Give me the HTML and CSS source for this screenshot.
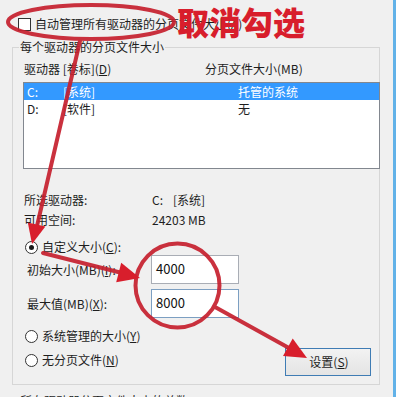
FILE: index.html
```html
<!DOCTYPE html>
<html lang="zh-CN">
<head>
<meta charset="utf-8">
<title>虚拟内存</title>
<link rel="stylesheet" href="styles.css">
</head>
<body>
<div class="page">
  <div class="auto-row">
    <span class="checkbox"></span>
    <span class="auto-text">自动管理所有驱动器的分页文件大小(A)</span>
  </div>
  <fieldset class="group">
    <legend>每个驱动器的分页文件大小</legend>
    <div class="list-head"><span class="head-drive">驱动器 [卷标](<u>D</u>)</span><span>分页文件大小(MB)</span></div>
    <div class="listbox">
      <div class="list-row selected"><span class="c1">C:</span><span class="c2">[系统]</span><span>托管的系统</span></div>
      <div class="list-row"><span class="c1">D:</span><span class="c2">[软件]</span><span>无</span></div>
    </div>
    <div class="info first"><span class="info-label">所选驱动器:</span><span>C:</span><span class="vol">[系统]</span></div>
    <div class="info"><span class="info-label">可用空间:</span><span>24203 MB</span></div>
    <div class="radio-row custom"><span class="radio checked"></span><span>自定义大小(<u>C</u>):</span></div>
    <div class="field-row"><span class="field-label">初始大小(MB)(<u>I</u>):</span><span class="input">4000</span></div>
    <div class="field-row second"><span class="field-label">最大值(MB)(<u>X</u>):</span><span class="input focus">8000</span></div>
    <div class="radio-row system"><span class="radio"></span><span>系统管理的大小(<u>Y</u>)</span></div>
    <div class="last-row">
      <div class="radio-row none"><span class="radio"></span><span>无分页文件(<u>N</u>)</span></div>
      <div class="button">设置(<u>S</u>)</div>
    </div>
  </fieldset>
  <div class="total">所有驱动器分页文件大小的总数</div>

  <div class="callout">取消勾选</div>
  <svg class="marks" width="396" height="397" viewBox="0 0 396 397" xmlns="http://www.w3.org/2000/svg">
    <g fill="none" stroke="#c6202e" stroke-width="4" stroke-linecap="round" opacity="0.92">
      <ellipse cx="91" cy="22" rx="83" ry="17"/>
      <circle cx="177.5" cy="285.5" r="42"/>
      <line x1="80" y1="41" x2="37" y2="226"/>
      <line x1="43" y1="253" x2="120" y2="272.5"/>
      <line x1="215" y1="307" x2="289" y2="348"/>
    </g>
    <g fill="#d81e2c">
      <polygon points="32,244 45.4,226.6 27.8,222.4"/>
      <polygon points="140,278 116.2,282.2 121.2,262.8"/>
      <polygon points="307,358 283,356 292.7,338.6"/>
    </g>
  </svg>
</div>
</body>
</html>
```

FILE: styles.css
```css
* {
  box-sizing: border-box;
}

html, body {
  margin: 0;
  padding: 0;
  background: #f0f0f0;
}

.page {
  position: relative;
  width: 396px;
  height: 397px;
  overflow: hidden;
  background: #f0f0f0;
  border-right: 3px solid #62b2e8;
  font-family: "Noto Sans CJK SC", "Noto Sans", sans-serif;
  font-size: 12px;
  line-height: 16px;
  color: #1e1e1e;
}

u {
  text-decoration: underline;
  text-underline-offset: 1px;
}

.auto-row {
  display: flex;
  align-items: center;
  height: 16px;
  margin-top: 16px;
  padding-left: 18px;
}

.checkbox {
  width: 13px;
  height: 13px;
  border: 1px solid #333;
  background: #fff;
  flex: none;
}

.auto-text {
  margin-left: 4px;
  white-space: nowrap;
}

.group {
  width: 368px;
  min-width: 0;
  margin: 7px 0 0 12px;
  padding: 6px 0 8px 10px;
  border: 1px solid #d6d6d6;
}

.group legend {
  margin-left: -4px;
  padding: 0 1px;
  line-height: 16px;
}

.list-head {
  display: flex;
  height: 16px;
  padding-left: 1px;
}

.head-drive {
  width: 181px;
}

.listbox {
  width: 357px;
  height: 87px;
  margin-top: 5px;
  border: 1px solid #82878f;
  background: #fff;
}

.list-row {
  display: flex;
  align-items: center;
  height: 17px;
  padding-left: 3px;
}

.list-row.selected {
  background: #3399ff;
  color: #fff;
}

.c1 {
  width: 36px;
}

.c2 {
  width: 175px;
}

.info {
  display: flex;
  align-items: center;
  height: 20px;
  padding-left: 1px;
}

.info.first {
  margin-top: 21px;
}

.info-label {
  width: 128px;
}

.vol {
  margin-left: 10px;
}

.radio-row {
  display: flex;
  align-items: center;
  height: 16px;
  padding-left: 2px;
}

.radio {
  position: relative;
  width: 13px;
  height: 13px;
  margin-right: 4px;
  border: 1px solid #333;
  border-radius: 50%;
  background: #fff;
  flex: none;
}

.radio.checked::after {
  content: "";
  position: absolute;
  left: 3px;
  top: 3px;
  width: 5px;
  height: 5px;
  border-radius: 50%;
  background: #1a1a1a;
}

.radio-row.custom {
  margin-top: 9px;
}

.field-row {
  display: flex;
  align-items: center;
  height: 29px;
  padding-left: 4px;
}

.field-row.second {
  margin-top: 5px;
}

.field-label {
  width: 124px;
}

.input {
  width: 88px;
  height: 29px;
  padding: 5px 0 0 4px;
  border: 1px solid #a9adb5;
  background: #fff;
  font-size: 13px;
  color: #111;
}

.input.focus {
  border-color: #7c9fc2;
}

.radio-row.system {
  margin-top: 10px;
}

.last-row {
  display: flex;
  align-items: center;
  justify-content: space-between;
  height: 28px;
  margin-top: 4px;
  padding-right: 8px;
}

.last-row .radio-row {
  margin-top: -4px;
}

.button {
  display: flex;
  align-items: center;
  justify-content: center;
  width: 86px;
  height: 28px;
  border: 1px solid #3f7cb4;
  background: linear-gradient(#f2f2f2, #e4e4e4);
  padding-left: 2px;
}

.total {
  margin-top: 8px;
  padding-left: 20px;
}

.callout {
  position: absolute;
  left: 177px;
  top: 5px;
  font-size: 32px;
  line-height: 32px;
  font-weight: 900;
  color: #d81e2c;
  white-space: nowrap;
}

.marks {
  position: absolute;
  left: 0;
  top: 0;
  pointer-events: none;
}
```
